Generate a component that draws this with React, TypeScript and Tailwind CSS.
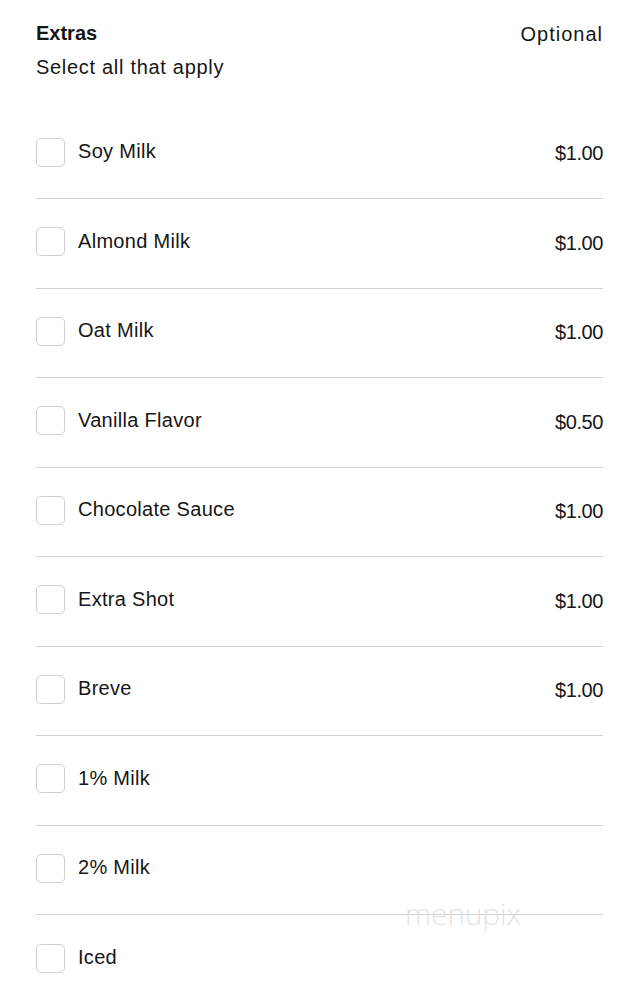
import React from "react";

const items: { name: string; price?: string }[] = [
  { name: "Soy Milk", price: "$1.00" },
  { name: "Almond Milk", price: "$1.00" },
  { name: "Oat Milk", price: "$1.00" },
  { name: "Vanilla Flavor", price: "$0.50" },
  { name: "Chocolate Sauce", price: "$1.00" },
  { name: "Extra Shot", price: "$1.00" },
  { name: "Breve", price: "$1.00" },
  { name: "1% Milk" },
  { name: "2% Milk" },
  { name: "Iced" },
];

export default function App() {
  return (
    <div
      className="relative w-[639px] h-[1000px] overflow-hidden bg-white text-[#161616]"
      style={{ fontFamily: '"Liberation Sans", Arial, sans-serif' }}
    >
      <div className="px-[36px] pt-[21px]">
        <div className="flex items-center justify-between h-[24px]">
          <span className="text-[20px] font-bold leading-[24px]">Extras</span>
          <span className="text-[20px] leading-[24px] tracking-[1px] pt-[2px]">Optional</span>
        </div>
        <div className="mt-[10px] text-[20px] leading-[24px] tracking-[0.7px]">
          Select all that apply
        </div>
        <div className="mt-[30.5px]">
          {items.map((it, i) => (
            <div
              key={i}
              className={`flex items-center h-[89.5px] pb-[3px] ${
                i < items.length - 1 ? "border-b-[1.5px] border-[#d2d2d2]" : ""
              }`}
            >
              <div className="w-[29px] h-[29px] rounded-[5px] border-[1.5px] border-[#cfcfcf] bg-white shrink-0" />
              <span className="ml-[13px] text-[20px] leading-[24px] tracking-[0.3px] -mt-[2px]">
                {it.name}
              </span>
              {it.price && (
                <span className="ml-auto text-[20px] leading-[24px] tracking-[-0.4px] mt-[2px]">
                  {it.price}
                </span>
              )}
            </div>
          ))}
        </div>
      </div>
      <div
        className="absolute left-[405px] top-[898px] text-[30px] leading-[32px] text-[#dedede] font-extralight pointer-events-none"
        style={{ fontFamily: '"Noto Sans", sans-serif' }}
      >
        menupix
      </div>
    </div>
  );
}
